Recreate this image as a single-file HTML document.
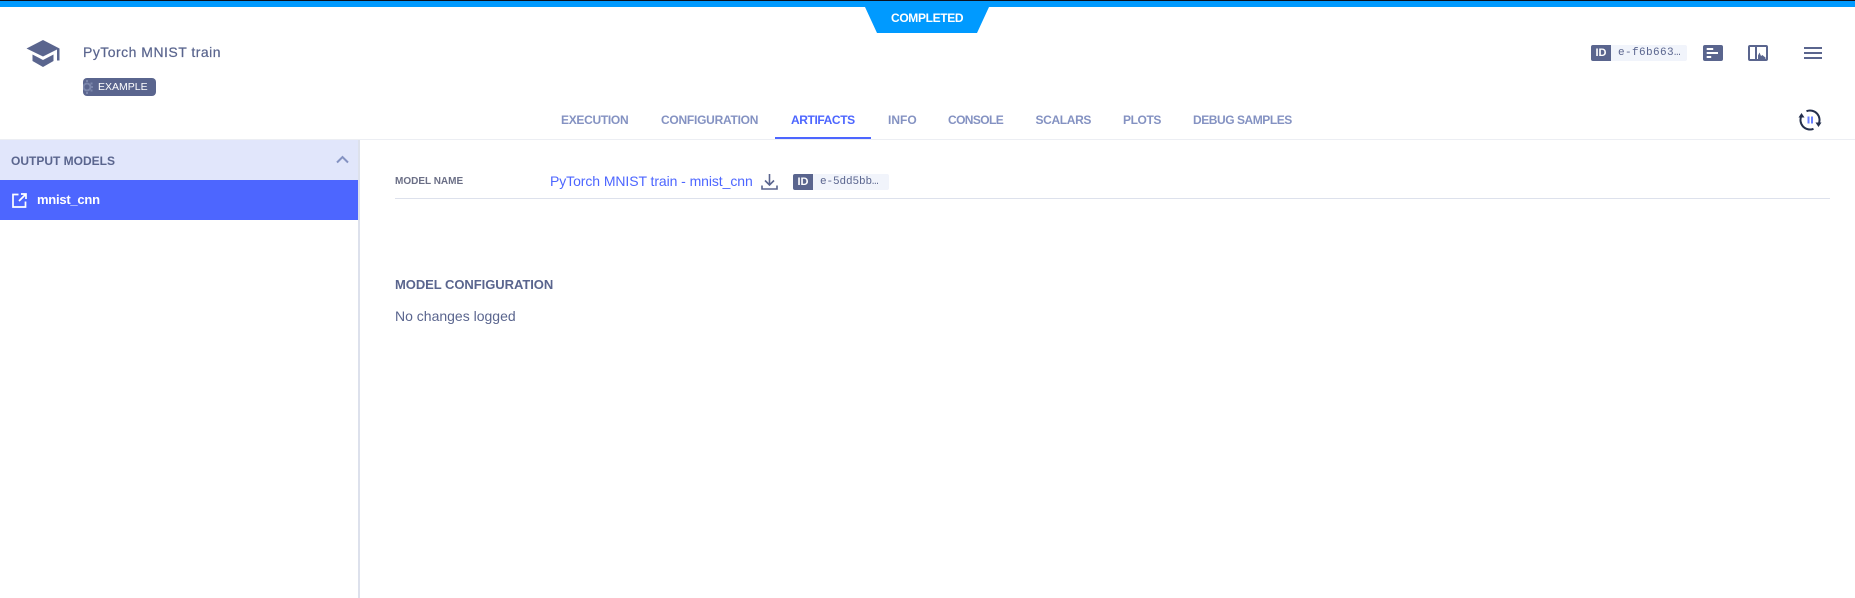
<!DOCTYPE html>
<html lang="en"><head><meta charset="utf-8"><title>PyTorch MNIST train</title>
<style>
*{box-sizing:border-box}
html,body{margin:0;padding:0;background:#fff}
body{width:1855px;height:598px;position:relative;overflow:hidden;font-family:"Liberation Sans",sans-serif;color:#5a658e}
.a{position:absolute;white-space:nowrap}
.tab{position:absolute;top:113px;height:14px;line-height:14px;font-size:12px;font-weight:700;color:#8492c2;white-space:nowrap}
.mono{font-family:"Liberation Mono",monospace;font-size:11px;color:#5a658e;white-space:nowrap;overflow:hidden}
.idd{position:absolute;background:#5a658e;color:#fff;font-size:11px;font-weight:700;text-align:center;line-height:16px;border-radius:2px 0 0 2px;width:20px;height:16px}
.idl{position:absolute;background:#f1f4fb;height:16px;border-radius:0 2px 2px 0;line-height:16px}
svg{position:absolute;display:block}
</style></head><body>
<div class="a" style="left:0;top:0;width:1855px;height:1px;background:#0b1220"></div>
<div class="a" style="left:0;top:1px;width:1855px;height:6px;background:#009aff"></div>
<svg style="left:860px;top:7px" width="135" height="26" viewBox="0 0 135 26"><polygon points="5,0 129,0 117,26 17,26" fill="#009aff"/></svg>
<div class="a" style="left:891px;top:11px;width:72px;line-height:14px;font-size:12px;font-weight:700;color:#fff;letter-spacing:-.35px">COMPLETED</div>

<svg style="left:26px;top:39px" width="34" height="28" viewBox="0 0 34 28"><path fill="#5a658e" d="M17 1 0.500 9.500 17 17.500 31 10.500V21.500H33.500V9.500Z"/><path fill="#5a658e" d="M6.500 15.500V22L17 28 27.500 22V15.500L17 21Z"/></svg>
<div class="a" style="left:83px;top:44px;line-height:16px;font-size:14px;color:#5a658e;letter-spacing:.48px;-webkit-text-stroke:.2px #5a658e">PyTorch MNIST train</div>
<div class="a" style="left:83px;top:78px;width:73px;height:18px;background:#5a658e;border-radius:4px"></div>
<svg style="left:83px;top:80px" width="12" height="14" viewBox="0 0 12 14"><circle cx="4" cy="7" r="3.500" fill="none" stroke="#7b86ab" stroke-width="2"/><path d="M3 0h2v2H3zM3 12h2v2H3zM7.500 2.500h2v2h-2zM7.500 9.500h2v2h-2zM8 6h2v2H8z" fill="#7b86ab"/></svg>
<div class="a" style="left:98px;top:81px;line-height:12px;font-size:10.5px;color:#fff">EXAMPLE</div>

<div class="idd" style="left:1591px;top:45px">ID</div>
<div class="idl mono" style="left:1611px;top:45px;width:76px;padding-left:7px;letter-spacing:.4px">e-f6b663…</div>
<svg style="left:1703px;top:45px" width="20" height="16" viewBox="0 0 20 16"><rect width="20" height="16" rx="2" fill="#5a658e"/><path d="M3.700 3h6.500v2H3.700zM3.700 7h11.300v2H3.700zM3.700 11h4.500v2H3.700z" fill="#fff"/></svg>
<svg style="left:1748px;top:45px" width="20" height="16" viewBox="0 0 20 16"><rect x="1" y="1" width="18" height="14" rx="1" fill="none" stroke="#5a658e" stroke-width="2"/><path d="M7 1h2v14H7z" fill="#5a658e"/><path d="M10 14V10.500l1.500-3 1.500 3.500 1.500-1 1 1 2 1.500v2z" fill="#5a658e"/></svg>
<svg style="left:1804px;top:47px" width="18" height="12" viewBox="0 0 18 12"><path d="M0 0h18v2H0zM0 5h18v2H0zM0 10h18v2H0z" fill="#5a658e"/></svg>

<div class="tab" style="left:561px;letter-spacing:-.3px">EXECUTION</div>
<div class="tab" style="left:661px;letter-spacing:-.25px">CONFIGURATION</div>
<div class="tab" style="left:791px;color:#4d66ff;letter-spacing:-.4px">ARTIFACTS</div>
<div class="tab" style="left:888px">INFO</div>
<div class="tab" style="left:948px;letter-spacing:-.6px">CONSOLE</div>
<div class="tab" style="left:1035.500px;letter-spacing:-.35px">SCALARS</div>
<div class="tab" style="left:1123px;letter-spacing:-.4px">PLOTS</div>
<div class="tab" style="left:1193px;letter-spacing:-.45px">DEBUG SAMPLES</div>
<svg style="left:1798px;top:108px" width="24" height="24" viewBox="0 0 24 24"><path d="M8.500 3.200A9.500 9.500 0 0 1 20.500 16.300M15.500 20.800A9.500 9.500 0 0 1 3.500 7.700" fill="none" stroke="#242f4d" stroke-width="2"/><path d="M17.500 14.500h6l-3 4.500zM.5 9.500h6l-3-4.500z" fill="#242f4d"/><path d="M9.500 8.500h2v7h-2zM13 8.500h2v7h-2z" fill="#6a80ff"/></svg>
<div class="a" style="left:0;top:139px;width:1855px;height:1px;background:#eceef3"></div>
<div class="a" style="left:775px;top:137px;width:96px;height:2px;background:#4d66ff"></div>

<div class="a" style="left:0;top:140px;width:358px;height:40px;background:#e1e6fb"></div>
<div class="a" style="left:11px;top:154px;line-height:14px;font-size:12px;font-weight:700;color:#5a658e">OUTPUT MODELS</div>
<svg style="left:336px;top:155px" width="13" height="9" viewBox="0 0 13 9"><path d="M1 7.500 6.500 2 12 7.500" fill="none" stroke="#8492c2" stroke-width="2"/></svg>
<div class="a" style="left:0;top:180px;width:358px;height:40px;background:#4d66ff"></div>
<svg style="left:12px;top:193px" width="15" height="15" viewBox="0 0 15 15"><path d="M6.500 1.500H1V14H13.500V8.500" fill="none" stroke="#fff" stroke-width="1.700"/><path d="M9 1h5v5M14 1 7 8" fill="none" stroke="#fff" stroke-width="1.700"/></svg>
<div class="a" style="left:37px;top:192px;line-height:16px;font-size:13px;font-weight:700;color:#fff;letter-spacing:-.25px">mnist_cnn</div>
<div class="a" style="left:358px;top:140px;width:2px;height:458px;background:#dde1ec"></div>

<div class="a" style="left:395px;top:176px;line-height:12px;font-size:10px;font-weight:700;color:#6b6f86">MODEL NAME</div>
<div class="a" style="left:550px;top:173px;line-height:16px;font-size:14px;color:#4d66ff;letter-spacing:-.08px">PyTorch MNIST train - mnist_cnn</div>
<svg style="left:761px;top:174px" width="17" height="16" viewBox="0 0 17 16"><path d="M8.500 0V10M4 6.500 8.500 11 13 6.500M1 11.500V15H16V11.500" fill="none" stroke="#5a658e" stroke-width="1.600"/></svg>
<div class="idd" style="left:793px;top:174px">ID</div>
<div class="idl mono" style="left:813px;top:174px;width:76px;padding-left:7px;letter-spacing:-.1px">e-5dd5bb…</div>
<div class="a" style="left:395px;top:198px;width:1435px;height:1px;background:#dde1ec"></div>

<div class="a" style="left:395px;top:277px;line-height:16px;font-size:13px;font-weight:700;color:#5a658e;letter-spacing:-.05px">MODEL CONFIGURATION</div>
<div class="a" style="left:395px;top:308px;line-height:16px;font-size:14px;color:#5a658e">No changes logged</div>
</body></html>
